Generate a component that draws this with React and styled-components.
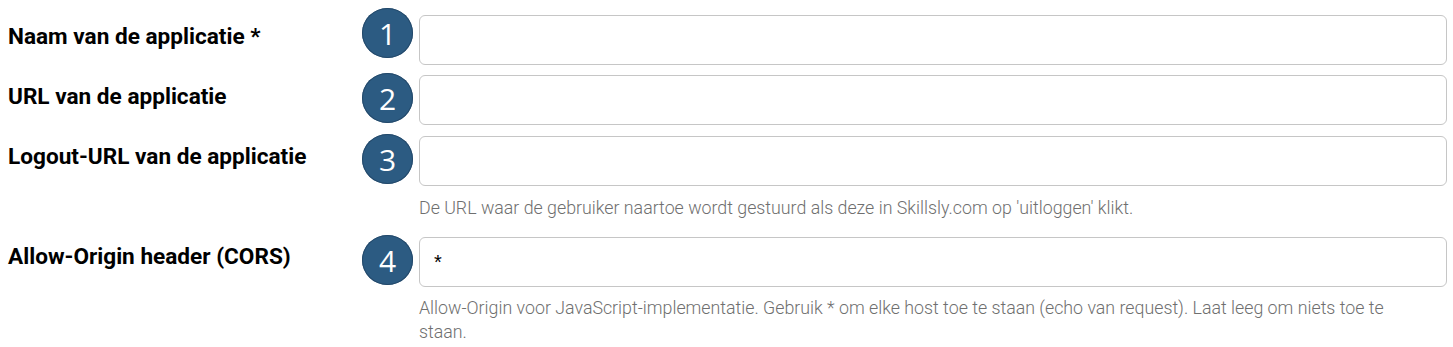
import React from "react";
import styled, { createGlobalStyle } from "styled-components";

const Global = createGlobalStyle`
  html, body { margin: 0; padding: 0; background: #fff; }
  body { font-family: Roboto, "Liberation Sans", sans-serif; }
`;

const Form = styled.div`
  padding: 15px 6px 0 8px;
  display: flex;
  flex-direction: column;
`;

const Row = styled.div`
  display: grid;
  grid-template-columns: 348px 51px 1fr;
  column-gap: 6px;
  align-items: center;
  margin-bottom: ${(p) => p.$mb}px;
`;

const Label = styled.label`
  font-family: Roboto, "Liberation Sans", sans-serif;
  font-weight: 700;
  font-size: 22.6px;
  line-height: 26px;
  color: #000;
  margin-bottom: ${(p) => p.$lift}px;
  white-space: nowrap;
`;

const Badge = styled.div`
  width: 51px;
  height: 50px;
  border-radius: 50%;
  background: #2c5b82;
  box-shadow: inset 0 0 0 1px #24496a;
  color: #fff;
  font-family: "Open Sans", "Noto Sans", sans-serif;
  font-size: 30px;
  display: flex;
  align-items: center;
  justify-content: center;
  transform: translateY(${(p) => p.$dy}px);
`;

const Input = styled.input`
  box-sizing: border-box;
  height: 50px;
  width: 100%;
  border: 1px solid #c6c6c6;
  border-radius: 6px;
  padding: 0 14px;
  font-family: "Liberation Sans", sans-serif;
  font-size: 20px;
  color: #000;
  background: #fff;
  outline: none;
`;

const Help = styled.div`
  grid-column: 3;
  font-family: Roboto, "Liberation Sans", sans-serif;
  font-weight: 300;
  font-size: 17.8px;
  line-height: 24px;
  color: #6f6f6f;
  padding-right: 22px;
  margin-top: ${(p) => p.$mt}px;
`;

const fields = [
  { n: 1, label: "Naam van de applicatie *", value: "", dy: -7, lift: 6, mb: 10 },
  { n: 2, label: "URL van de applicatie", value: "", dy: -2, lift: 6, mb: 11 },
  { n: 3, label: "Logout-URL van de applicatie", value: "", dy: -2, lift: 8, mb: 17, hmt: 10,
    help: "De URL waar de gebruiker naartoe wordt gestuurd als deze in Skillsly.com op 'uitloggen' klikt." },
  { n: 4, label: "Allow-Origin header (CORS)", value: "*", dy: -2, lift: 10, mb: 0, hmt: 9,
    help: "Allow-Origin voor JavaScript-implementatie. Gebruik * om elke host toe te staan (echo van request). Laat leeg om niets toe te staan." },
];

export default function App() {
  return (
    <>
      <Global />
      <Form>
        {fields.map((f) => (
          <Row key={f.n} $mb={f.mb}>
            <Label $lift={f.lift}>{f.label}</Label>
            <Badge $dy={f.dy}>{f.n}</Badge>
            <Input defaultValue={f.value} readOnly />
            {f.help && <Help $mt={f.hmt}>{f.help}</Help>}
          </Row>
        ))}
      </Form>
    </>
  );
}
